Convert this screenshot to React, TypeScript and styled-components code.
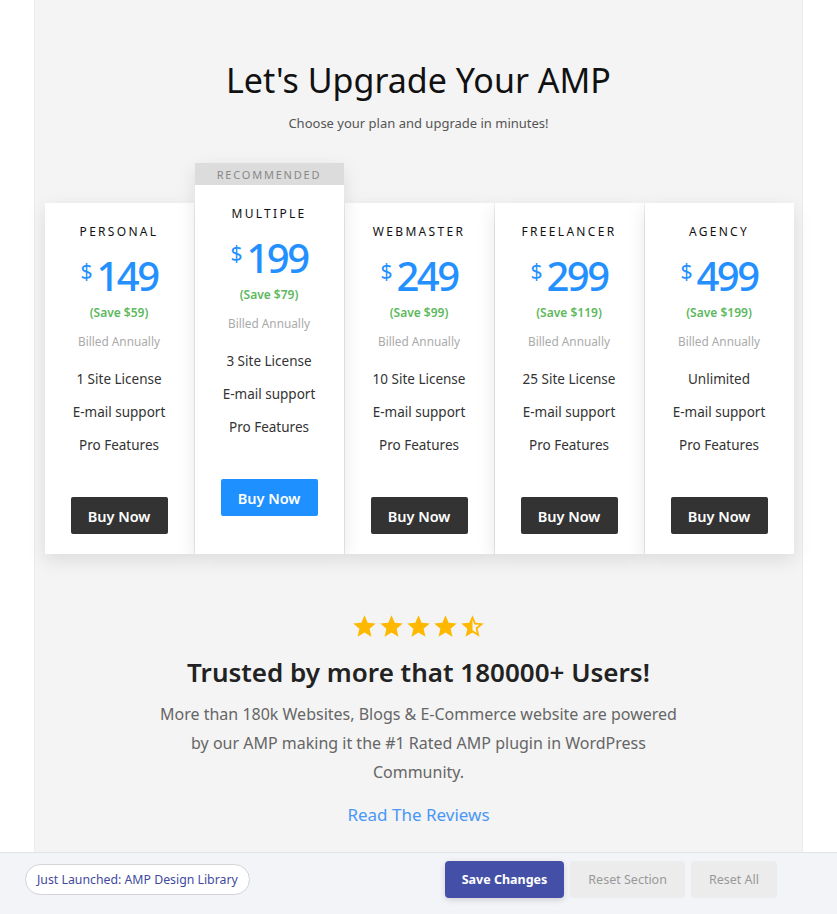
import React from 'react';
import styled, {createGlobalStyle} from 'styled-components';

const GlobalStyle = createGlobalStyle`
    html, body {
        margin: 0;
        padding: 0;
        background: #fff;
        font-family: "Noto Sans", "Open Sans", Arial, sans-serif;
    }
    * { box-sizing: border-box; }
`

const Page = styled.div`
    height: 100vh;
    display: flex;
    flex-direction: column;
    overflow: hidden;
`

const Panel = styled.main`
    flex: 1;
    width: 769px;
    margin: 0 auto;
    background: #f4f4f4;
    border-left: 1px solid #ececec;
    border-right: 1px solid #ececec;
    padding-top: 57px;
    display: flex;
    flex-direction: column;
    align-items: center;
`

const Title = styled.h1`
    margin: 0;
    font-size: 34px;
    font-weight: 400;
    line-height: 46px;
    color: #111;
`

const Subtitle = styled.p`
    margin: 11px 0 0;
    font-size: 13px;
    color: #555;
`

const Plans = styled.div`
    margin-top: 31px;
    display: flex;
    align-items: flex-end;
    gap: 1px;
    width: 748px;
`

const Card = styled.div<{$featured?: boolean}>`
    width: 149px;
    flex: none;
    background: #fff;
    box-shadow: 0 6px 18px rgba(0, 0, 0, 0.1);
    display: flex;
    flex-direction: column;
    align-items: center;
    padding: 0 0 ${p => p.$featured ? 38 : 20}px;
    position: relative;
    z-index: ${p => p.$featured ? 2 : 1};
`

const Ribbon = styled.div`
    align-self: stretch;
    height: 22px;
    background: #dcdcdc;
    color: #888;
    font-size: 11px;
    letter-spacing: 1.8px;
    display: flex;
    align-items: center;
    justify-content: center;
`

const PlanName = styled.div`
    margin-top: 20px;
    font-size: 12px;
    letter-spacing: 2.3px;
    color: #111;
    line-height: 18px;
`

const Price = styled.div`
    margin-top: 11px;
    display: flex;
    align-items: flex-start;
    color: #2490ff;
    line-height: 48px;
`

const Currency = styled.span`
    font-size: 21px;
    line-height: 38px;
    margin-right: 4px;
`

const Amount = styled.span`
    font-size: 40px;
    font-weight: 500;
    letter-spacing: -2.5px;
`

const Save = styled.div`
    margin-top: 4px;
    font-size: 12px;
    font-weight: 600;
    color: #5cb85c;
    line-height: 18px;
`

const Billed = styled.div`
    margin-top: 10px;
    font-size: 11.8px;
    color: #aaa;
    line-height: 18px;
`

const Features = styled.ul`
    list-style: none;
    margin: 19px 0 0;
    padding: 0;
    display: flex;
    flex-direction: column;
    align-items: center;
    gap: 13px;
`

const Feature = styled.li`
    font-size: 13.5px;
    color: #333;
    line-height: 20px;
`

const BuyButton = styled.button<{$primary?: boolean}>`
    margin-top: 42px;
    width: 97px;
    height: 37px;
    border: none;
    border-radius: 2px;
    background: ${p => p.$primary ? '#1e90ff' : '#333'};
    color: #fff;
    font-family: inherit;
    font-size: 14.5px;
    font-weight: 600;
    cursor: pointer;
`

const Stars = styled.div`
    margin-top: 59px;
    display: flex;
    color: #ffb800;
`

const Trusted = styled.h2`
    margin: 14px 0 0;
    font-size: 26px;
    font-weight: 600;
    color: #222;
    line-height: 36px;
`

const Blurb = styled.p`
    margin: 10px 0 0;
    width: 530px;
    text-align: center;
    font-size: 16px;
    line-height: 29px;
    color: #666;
`

const ReviewsLink = styled.a`
    margin-top: 16px;
    font-size: 17px;
    color: #4a97f5;
    text-decoration: none;
`

const Footer = styled.footer`
    height: 62px;
    flex: none;
    background: #f3f4f8;
    border-top: 1px solid #e2e3e8;
    display: flex;
    align-items: center;
    padding: 0 25px 9px;
`

const Pill = styled.a`
    height: 31px;
    padding: 0 11px;
    border: 1px solid #d4d4d8;
    border-radius: 16px;
    background: #fff;
    color: #3f4aa0;
    font-size: 12.3px;
    display: flex;
    align-items: center;
    text-decoration: none;
`

const Actions = styled.div`
    margin-left: auto;
    margin-right: 35px;
    display: flex;
    gap: 6px;
    align-items: center;
`

const ActionButton = styled.button<{$primary?: boolean}>`
    height: 37px;
    padding: 0 ${p => p.$primary ? 17 : 18}px;
    border: none;
    border-radius: 4px;
    font-family: inherit;
    font-size: 12.5px;
    font-weight: ${p => p.$primary ? 700 : 400};
    background: ${p => p.$primary ? '#4450a8' : '#ececec'};
    color: ${p => p.$primary ? '#fff' : '#999'};
    box-shadow: ${p => p.$primary ? '0 2px 6px rgba(0,0,0,0.15)' : 'none'};
    cursor: pointer;
`

interface Plan {
    name: string,
    price: number,
    save: number,
    license: string,
    featured?: boolean
}

const plans: Plan[] = [
    {name: 'PERSONAL', price: 149, save: 59, license: '1 Site License'},
    {name: 'MULTIPLE', price: 199, save: 79, license: '3 Site License', featured: true},
    {name: 'WEBMASTER', price: 249, save: 99, license: '10 Site License'},
    {name: 'FREELANCER', price: 299, save: 119, license: '25 Site License'},
    {name: 'AGENCY', price: 499, save: 199, license: 'Unlimited'},
]

const STAR = "M12 17.27L18.18 21l-1.64-7.03L22 9.24l-7.19-.61L12 2 9.19 8.63 2 9.24l5.46 4.73L5.82 21z"
const HALF_STAR = "M22 9.24l-7.19-.62L12 2 9.19 8.63 2 9.24l5.46 4.73L5.82 21 12 17.27 18.18 21l-1.63-7.03L22 9.24zM12 15.4V6.1l1.71 4.04 4.38.38-3.32 2.88 1 4.28L12 15.4z"

function Star({half}: {half?: boolean}) {
    return (
        <svg width="27" height="27" viewBox="0 0 24 24" fill="currentColor">
            <path d={half ? HALF_STAR : STAR}/>
        </svg>
    );
}

function App() {
    return (
        <Page>
            <GlobalStyle/>
            <Panel>
                <Title>Let's Upgrade Your AMP</Title>
                <Subtitle>Choose your plan and upgrade in minutes!</Subtitle>
                <Plans>
                    {plans.map((plan) => (
                        <Card key={plan.name} $featured={plan.featured}>
                            {plan.featured && <Ribbon>RECOMMENDED</Ribbon>}
                            <PlanName>{plan.name}</PlanName>
                            <Price>
                                <Currency>$</Currency>
                                <Amount>{plan.price}</Amount>
                            </Price>
                            <Save>(Save ${plan.save})</Save>
                            <Billed>Billed Annually</Billed>
                            <Features>
                                <Feature>{plan.license}</Feature>
                                <Feature>E-mail support</Feature>
                                <Feature>Pro Features</Feature>
                            </Features>
                            <BuyButton $primary={plan.featured}>Buy Now</BuyButton>
                        </Card>
                    ))}
                </Plans>
                <Stars>
                    <Star/><Star/><Star/><Star/><Star half/>
                </Stars>
                <Trusted>Trusted by more that 180000+ Users!</Trusted>
                <Blurb>
                    More than 180k Websites, Blogs &amp; E-Commerce website are powered by our AMP making it the #1 Rated AMP plugin in WordPress Community.
                </Blurb>
                <ReviewsLink href="#">Read The Reviews</ReviewsLink>
            </Panel>
            <Footer>
                <Pill href="#">Just Launched: AMP Design Library</Pill>
                <Actions>
                    <ActionButton $primary>Save Changes</ActionButton>
                    <ActionButton>Reset Section</ActionButton>
                    <ActionButton>Reset All</ActionButton>
                </Actions>
            </Footer>
        </Page>
    );
}

export default App;
